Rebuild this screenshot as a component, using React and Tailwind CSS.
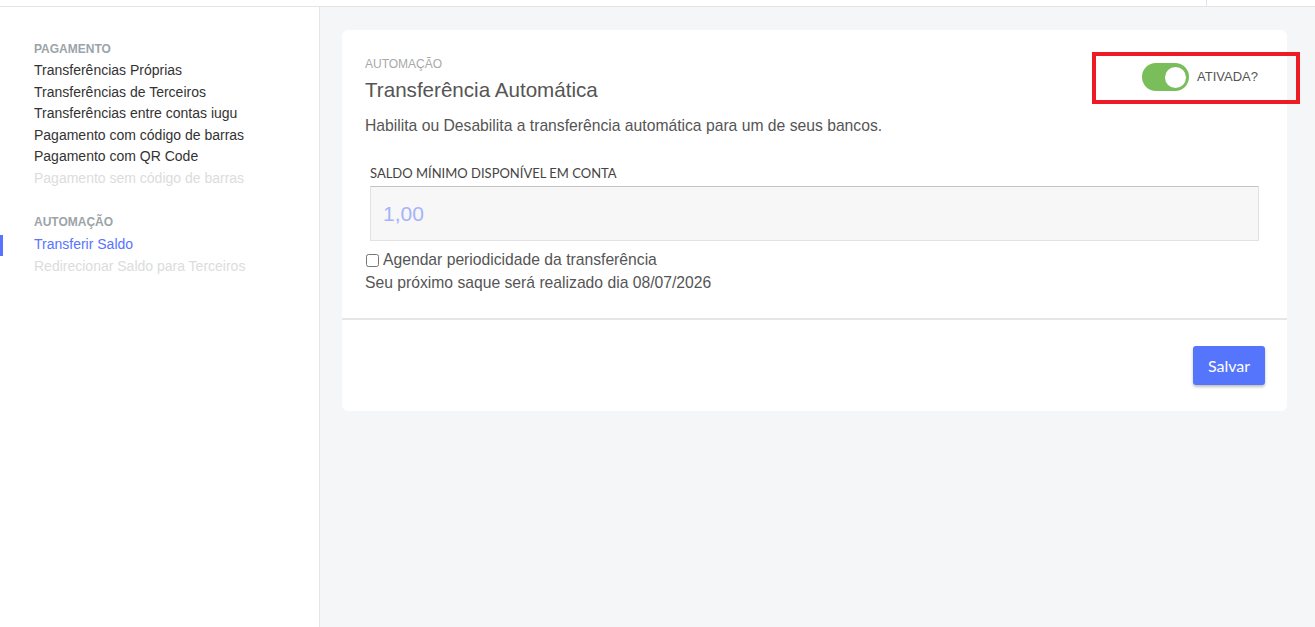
export default function App() {
  const sans = { fontFamily: '"Liberation Sans", Arial, sans-serif' };
  return (
    <div className="w-[1315px] h-[627px] flex flex-col bg-[#f5f6f8] overflow-hidden" style={sans}>
      {/* top bar */}
      <div className="h-[7px] shrink-0 bg-white border-b border-[#e3e4e6] flex">
        <div className="w-[1207px] h-full border-r border-[#e3e4e6]" />
      </div>
      <div className="flex flex-1 min-h-0">
        {/* sidebar */}
        <aside className="w-[320px] shrink-0 bg-white border-r border-[#e5e6e8] pt-[34px] pl-[34px]">
          <div className="text-[12px] leading-[16px] font-bold text-[#9ba4a8] mb-[3px]">PAGAMENTO</div>
          <ul className="text-[14px] leading-[21.5px] text-[#333]">
            <li>Transferências Próprias</li>
            <li>Transferências de Terceiros</li>
            <li>Transferências entre contas iugu</li>
            <li>Pagamento com código de barras</li>
            <li>Pagamento com QR Code</li>
            <li className="text-[#dcdcdc]">Pagamento sem código de barras</li>
          </ul>
          <div className="text-[12px] leading-[16px] font-bold text-[#9ba4a8] mt-[25px] mb-[4px]">AUTOMAÇÃO</div>
          <ul className="text-[14px] leading-[21.5px]">
            <li className="relative text-[#5873ff]">
              <span className="absolute -left-[34px] top-[1px] w-[3px] h-[21px] bg-[#5873ff]" />
              Transferir Saldo
            </li>
            <li className="text-[#dcdcdc]">Redirecionar Saldo para Terceiros</li>
          </ul>
        </aside>
        {/* main */}
        <main className="flex-1 pt-[23px] pl-[22px] pr-[28px]">
          <div className="bg-white rounded-[6px]">
            <div className="pt-[26px] px-[23px] pb-[25px]">
              <div className="flex justify-between items-start">
                <div>
                  <div className="text-[12px] leading-[16px] text-[#a9a9a9]">AUTOMAÇÃO</div>
                  <div className="mt-[4px] text-[20.6px] leading-[28px] text-[#555]">Transferência Automática</div>
                  <div className="mt-[12px] text-[15.7px] leading-[20px] text-[#555]">
                    Habilita ou Desabilita a transferência automática para um de seus bancos.
                  </div>
                </div>
                <div className="relative mt-[6px] mr-[6px] h-[30px] flex items-center gap-[8px]">
                  <div className="w-[47px] h-[28px] rounded-full bg-[#7abd5b] relative">
                    <div className="absolute right-[1px] top-[1.5px] w-[25px] h-[25px] rounded-full bg-white border-[2px] border-[#7abd5b]" />
                  </div>
                  <span className="text-[13px] text-[#555]">ATIVADA?</span>
                  <div className="absolute -left-[50px] -right-[42px] -top-[10px] -bottom-[12px] border-[4px] border-[#ed1c24] pointer-events-none" />
                </div>
              </div>
              <div className="mt-[28px] px-[5px]">
                <div className="text-[13px] leading-[18px] text-[#444]" style={{ fontFamily: 'Lato, "Open Sans", sans-serif' }}>
                  SALDO MÍNIMO DISPONÍVEL EM CONTA
                </div>
                <div className="mt-[4px] h-[55px] bg-[#f7f7f7] border border-[#e2e2e2] border-t-[#c4c4c4] flex items-center px-[12px] text-[21px] text-[#a4b3fb]">
                  1,00
                </div>
              </div>
              <label className="mt-[8px] flex items-center gap-[4px] text-[15.7px] leading-[22px] text-[#555]">
                <input type="checkbox" className="w-[13px] h-[13px] ml-[1px]" />
                Agendar periodicidade da transferência
              </label>
              <div className="mt-[2px] text-[15.7px] leading-[20px] text-[#555]">
                Seu próximo saque será realizado dia 08/07/2026
              </div>
            </div>
            <div className="h-[2px] bg-[#e6e6e6]" />
            <div className="flex justify-end pt-[26px] pb-[26px] pr-[22px]">
              <button
                className="w-[72px] h-[39px] rounded-[3px] bg-[#5675fd] text-white text-[16px] shadow-[0_2px_3px_rgba(0,0,0,0.25)]"
                style={{ fontFamily: 'Lato, "Open Sans", sans-serif' }}
              >
                Salvar
              </button>
            </div>
          </div>
        </main>
      </div>
    </div>
  );
}
